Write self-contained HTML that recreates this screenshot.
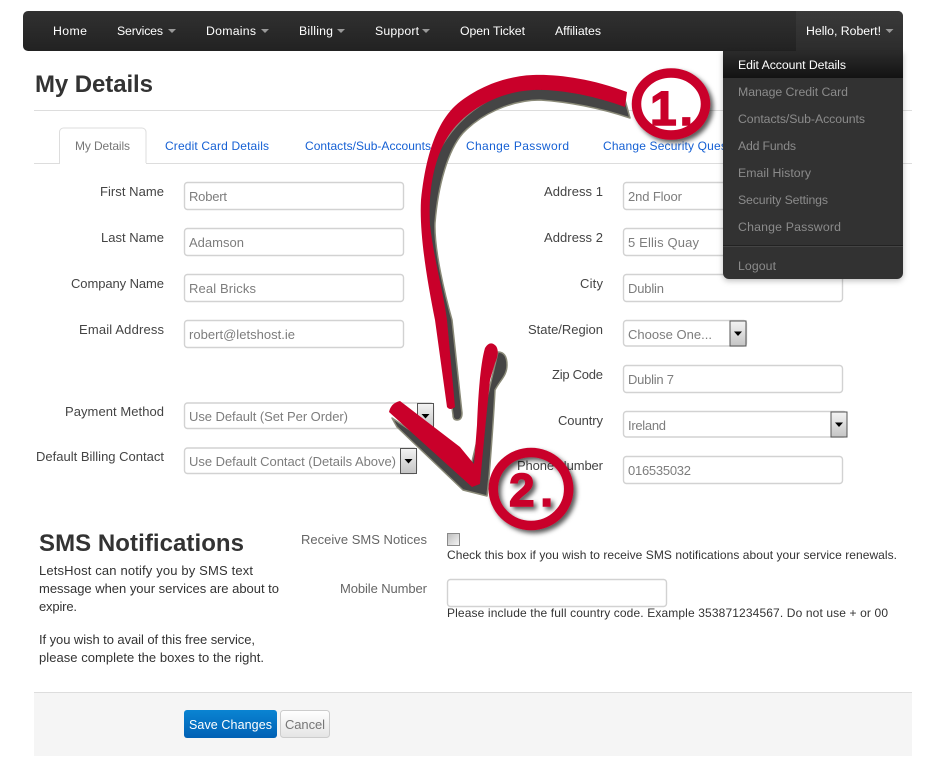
<!DOCTYPE html>
<html lang="en">
<head>
<meta charset="utf-8">
<title>My Details</title>
<style>
html,body{margin:0;padding:0;background:#fff;width:946px;height:768px;overflow:hidden}
svg{display:block;position:absolute;left:0;top:0}
text{font-family:"Liberation Sans",Arial,sans-serif;font-size:13px}
.nav{fill:#fff;font-size:12.3px}
.dd{fill:#8b8b8b}
.lnk{fill:#1560d4}
.lbl{fill:#444}
.lb2{fill:#666}
.val{fill:#7d7d7d}
.body{fill:#333}
.inp{fill:#fff;stroke:#d2d2d2;stroke-width:1.4}
.car{fill:#999}
.red{fill:#c9002b}
.sh{fill:#444;stroke:#8a8a78;stroke-width:1.5;stroke-linejoin:round}
.big{font-weight:bold;fill:#c9002b;stroke:#c9002b;stroke-width:1.4}
</style>
</head>
<body>
<svg width="946" height="768" viewBox="0 0 946 768" xmlns="http://www.w3.org/2000/svg">
<defs>
<linearGradient id="navg" x1="0" y1="0" x2="0" y2="1"><stop offset="0" stop-color="#313131"/><stop offset="1" stop-color="#222"/></linearGradient>
<linearGradient id="hellog" x1="0" y1="0" x2="0" y2="1"><stop offset="0" stop-color="#3a3a3a"/><stop offset="1" stop-color="#2c2c2c"/></linearGradient>
<linearGradient id="actg" x1="0" y1="0" x2="0" y2="1"><stop offset="0" stop-color="#2b2b2b"/><stop offset="1" stop-color="#131313"/></linearGradient>
<linearGradient id="btng" x1="0" y1="0" x2="0" y2="1"><stop offset="0" stop-color="#f4f4f4"/><stop offset="1" stop-color="#c4c4c4"/></linearGradient>
<linearGradient id="saveg" x1="0" y1="0" x2="0" y2="1"><stop offset="0" stop-color="#0a84d2"/><stop offset="1" stop-color="#0060b4"/></linearGradient>
<linearGradient id="cang" x1="0" y1="0" x2="0" y2="1"><stop offset="0" stop-color="#fff"/><stop offset="1" stop-color="#e4e4e4"/></linearGradient>
<linearGradient id="chkg" x1="0" y1="0" x2="1" y2="1"><stop offset="0" stop-color="#bbb"/><stop offset="1" stop-color="#f6f6f6"/></linearGradient>
<filter id="ds" x="-30%" y="-30%" width="170%" height="170%"><feDropShadow dx="3" dy="3" stdDeviation="2.4" flood-color="#000" flood-opacity=".65"/></filter>
<filter id="dds" x="-10%" y="-10%" width="120%" height="120%"><feDropShadow dx="0" dy="2" stdDeviation="3" flood-color="#000" flood-opacity=".25"/></filter>
<filter id="soft"><feGaussianBlur stdDeviation=".35"/></filter>
<g id="sb"><rect x=".5" y=".5" width="16" height="25" fill="url(#btng)" stroke="#555"/><path d="M4.500 11h8l-4 4.500z" fill="#000"/></g>
</defs>

<!-- navbar -->
<rect x="23" y="11" width="880" height="40" rx="5" fill="url(#navg)"/>
<path d="M796 11H898a5 5 0 0 1 5 5V51H796z" fill="url(#hellog)"/>
<text class="nav" x="53" y="35" textLength="34">Home</text>
<text class="nav" x="117" y="35" textLength="46">Services</text><path class="car" d="M168 29h8l-4 4z"/>
<text class="nav" x="206" y="35" textLength="50">Domains</text><path class="car" d="M261 29h8l-4 4z"/>
<text class="nav" x="299" y="35" textLength="34">Billing</text><path class="car" d="M337 29h8l-4 4z"/>
<text class="nav" x="375" y="35" textLength="44">Support</text><path class="car" d="M422 29h8l-4 4z"/>
<text class="nav" x="460" y="35" textLength="65">Open Ticket</text>
<text class="nav" x="555" y="35" textLength="46">Affiliates</text>
<text class="nav" x="806" y="35" textLength="75">Hello, Robert!</text><path class="car" d="M885.500 29h8l-4 4z"/>

<!-- title -->
<text x="35" y="92" textLength="118" style="font-size:24px;font-weight:bold;fill:#333">My Details</text>
<rect x="34" y="110" width="878" height="1" fill="#ddd"/>

<!-- tabs -->
<rect x="34" y="163" width="878" height="1" fill="#ddd"/>
<path d="M59.500 164V132a4 4 0 0 1 4-4H142a4 4 0 0 1 4 4V164" fill="#fff" stroke="#ddd"/>
<rect x="60" y="163" width="86" height="1.500" fill="#fff"/>
<text x="75" y="150" textLength="55" style="fill:#777;font-size:12px">My Details</text>
<text class="lnk" x="165" y="150" textLength="104" style="font-size:12px">Credit Card Details</text>
<text class="lnk" x="305" y="150" textLength="126" style="font-size:12px">Contacts/Sub-Accounts</text>
<text class="lnk" x="466" y="150" textLength="103" style="font-size:12px">Change Password</text>
<text class="lnk" x="603" y="150" textLength="150" style="font-size:12px">Change Security Questions</text>

<!-- left form -->
<text class="lbl" x="100" y="196" textLength="64">First Name</text>
<text class="lbl" x="101" y="242" textLength="63">Last Name</text>
<text class="lbl" x="71" y="288" textLength="93">Company Name</text>
<text class="lbl" x="79" y="334" textLength="85">Email Address</text>
<text class="lbl" x="65" y="416" textLength="99">Payment Method</text>
<text class="lbl" x="36" y="461" textLength="128">Default Billing Contact</text>

<rect class="inp" x="184.500" y="182.500" width="219" height="27" rx="3"/>
<rect class="inp" x="184.500" y="228.500" width="219" height="27" rx="3"/>
<rect class="inp" x="184.500" y="274.500" width="219" height="27" rx="3"/>
<rect class="inp" x="184.500" y="320.500" width="219" height="27" rx="3"/>
<text class="val" x="189" y="201" textLength="38">Robert</text>
<text class="val" x="189" y="247" textLength="55">Adamson</text>
<text class="val" x="189" y="293" textLength="67">Real Bricks</text>
<text class="val" x="189" y="339" textLength="106">robert@letshost.ie</text>

<rect class="inp" x="184.500" y="403" width="249" height="25.500" rx="3"/>
<use href="#sb" x="417" y="403"/>
<text class="val" x="189" y="421" textLength="159">Use Default (Set Per Order)</text>
<rect class="inp" x="184.500" y="448" width="232" height="25.500" rx="3"/>
<use href="#sb" x="400" y="448"/>
<text class="val" x="189" y="466" textLength="207">Use Default Contact (Details Above)</text>

<!-- right form -->
<text class="lbl" x="544" y="196" textLength="59">Address 1</text>
<text class="lbl" x="544" y="242" textLength="59">Address 2</text>
<text class="lbl" x="580" y="288" textLength="23">City</text>
<text class="lbl" x="528" y="334" textLength="75">State/Region</text>
<text class="lbl" x="552" y="379" textLength="51">Zip Code</text>
<text class="lbl" x="558" y="425" textLength="45">Country</text>
<text class="lbl" x="517" y="470" textLength="86">Phone Number</text>

<rect class="inp" x="623.500" y="182.500" width="219" height="27" rx="3"/>
<rect class="inp" x="623.500" y="228.500" width="219" height="27" rx="3"/>
<rect class="inp" x="623.500" y="274.500" width="219" height="27" rx="3"/>
<rect class="inp" x="623.500" y="320.500" width="123" height="25.500" rx="3"/>
<use href="#sb" x="729.500" y="320.500"/>
<rect class="inp" x="623.500" y="365.500" width="219" height="27" rx="3"/>
<rect class="inp" x="623.500" y="411.500" width="223" height="25.500" rx="3"/>
<use href="#sb" x="830.500" y="411.500"/>
<rect class="inp" x="623.500" y="456.500" width="219" height="27" rx="3"/>
<text class="val" x="628" y="201" textLength="54">2nd Floor</text>
<text class="val" x="628" y="247" textLength="71">5 Ellis Quay</text>
<text class="val" x="628" y="293" textLength="36">Dublin</text>
<text class="val" x="628" y="339" textLength="84">Choose One...</text>
<text class="val" x="628" y="384" textLength="46">Dublin 7</text>
<text class="val" x="628" y="430" textLength="38">Ireland</text>
<text class="val" x="628" y="475" textLength="63">016535032</text>

<!-- SMS -->
<text x="39" y="551" textLength="205" style="font-size:24px;font-weight:bold;fill:#333">SMS Notifications</text>
<text class="body" x="39" y="575" textLength="214">LetsHost can notify you by SMS text</text>
<text class="body" x="39" y="593" textLength="240">message when your services are about to</text>
<text class="body" x="39" y="611" textLength="38">expire.</text>
<text class="body" x="39" y="644" textLength="216">If you wish to avail of this free service,</text>
<text class="body" x="39" y="662" textLength="225">please complete the boxes to the right.</text>
<text class="lb2" x="301" y="544" textLength="126">Receive SMS Notices</text>
<text class="lb2" x="340" y="593" textLength="87">Mobile Number</text>
<rect x="447.500" y="533.500" width="12" height="12" fill="url(#chkg)" stroke="#8a8a8a"/>
<text class="body" x="447" y="559" textLength="450" style="font-size:12px">Check this box if you wish to receive SMS notifications about your service renewals.</text>
<rect class="inp" x="447.500" y="579.500" width="219" height="27" rx="3"/>
<text class="body" x="447" y="617" textLength="441" style="font-size:12px">Please include the full country code. Example 353871234567. Do not use + or 00</text>

<!-- footer -->
<rect x="34" y="692" width="878" height="64" fill="#f5f5f5"/>
<rect x="34" y="692" width="878" height="1" fill="#ddd"/>
<rect x="184" y="710" width="93" height="28" rx="3" fill="url(#saveg)"/>
<text x="189" y="729" textLength="83" style="fill:#fff;font-size:12.500px">Save Changes</text>
<rect x="280.500" y="710.500" width="49" height="27" rx="3" fill="url(#cang)" stroke="#ccc"/>
<text x="285" y="729" textLength="40" style="fill:#777">Cancel</text>

<!-- annotation arrows -->
<g filter="url(#soft)">
<path class="sh" d="M625 100L630 118C600 108 570 102 540 100C510 100 480 115 463 133C448 150 438 185 435 223C434 250 445 295 452 320L462 413Q462 420 457 420Q453 420 453 415L440 320L425 220C420 170 450 100 533 85Z"/>
<path class="red" d="M627 92C590 78 555 74 533 75C505 76 475 88 455 106C435 125 425 160 421 200C419 235 428 285 435 320L447 407Q450 411 455 407L447 320C443 290 434 260 430 225C428 190 434 160 447 138C462 113 495 92 533 90C560 89 595 96 625 107Z"/>
<path class="sh" d="M392 418L397 427L463 490L487 496L489 477C492 440 494 410 495 390C500 380 507 376 507 365Q507 352 498 352L470 470Z"/>
<path class="red" d="M400 401Q391 403 389 412L472 487L480 484C483 450 487 410 490 380L495 363Q500 352 496 346Q490 340 485 348C480 365 478 400 477 425L474 464L460 447Z"/>
</g>

<!-- badges -->
<g filter="url(#ds)">
<ellipse cx="671" cy="104" rx="34.500" ry="31" fill="#fff" stroke="#c9002b" stroke-width="9.500"/>
<text class="big" x="650" y="125" textLength="43" style="font-size:48px">1.</text>
</g>
<g filter="url(#ds)">
<ellipse cx="531" cy="489" rx="37.700" ry="36.500" fill="none" stroke="#c9002b" stroke-width="9.500"/>
<text class="big" x="509" y="506" textLength="44" style="font-size:46px">2.</text>
</g>

<!-- dropdown -->
<path d="M723 51H903V273a6 6 0 0 1-6 6H729a6 6 0 0 1-6-6z" fill="#333" filter="url(#dds)"/>
<rect x="723" y="51" width="180" height="27" fill="url(#actg)"/>
<text x="738" y="69" textLength="108" style="fill:#fff;font-size:12.300px">Edit Account Details</text>
<text class="dd" x="738" y="96" textLength="110" style="font-size:12.300px">Manage Credit Card</text>
<text class="dd" x="738" y="123" textLength="127" style="font-size:12.300px">Contacts/Sub-Accounts</text>
<text class="dd" x="738" y="150" textLength="58" style="font-size:12.300px">Add Funds</text>
<text class="dd" x="738" y="177" textLength="73" style="font-size:12.300px">Email History</text>
<text class="dd" x="738" y="204" textLength="90" style="font-size:12.300px">Security Settings</text>
<text class="dd" x="738" y="231" textLength="103" style="font-size:12.300px">Change Password</text>
<rect x="723" y="245" width="180" height="1" fill="#222"/>
<rect x="723" y="246" width="180" height="1" fill="#444"/>
<text class="dd" x="738" y="270" textLength="38" style="font-size:12.300px">Logout</text>
</svg>
</body>
</html>
